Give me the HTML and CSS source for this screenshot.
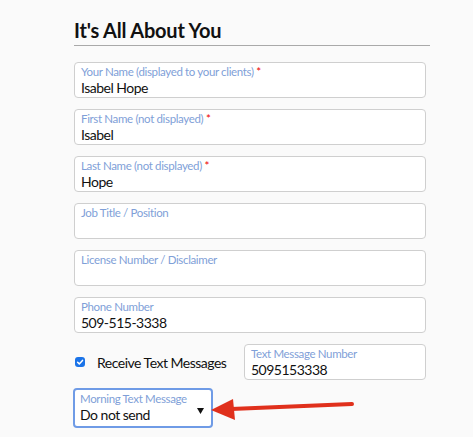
FILE: index.html
```html
<!DOCTYPE html>
<html lang="en">
<head>
    <meta charset="UTF-8">
    <meta name="viewport" content="width=device-width, initial-scale=1.0">
    <title>Profile - About You</title>
    <link rel="stylesheet" href="styles.css">
</head>
<body>
<div class="profile-container">
    <h2>It's All About You</h2>

    <div class="field">
        <label>Your Name (displayed to your clients) <span class="req">*</span></label>
        <div class="value">Isabel Hope</div>
    </div>

    <div class="field">
        <label>First Name (not displayed) <span class="req">*</span></label>
        <div class="value">Isabel</div>
    </div>

    <div class="field">
        <label>Last Name (not displayed) <span class="req">*</span></label>
        <div class="value">Hope</div>
    </div>

    <div class="field">
        <label>Job Title / Position</label>
        <div class="value"></div>
    </div>

    <div class="field">
        <label>License Number / Disclaimer</label>
        <div class="value"></div>
    </div>

    <div class="field">
        <label>Phone Number</label>
        <div class="value">509-515-3338</div>
    </div>

    <div class="sms-row">
        <div class="check-wrap">
            <span class="checkbox">
                <svg viewBox="0 0 10 10" width="10" height="10">
                    <path d="M2.6 5.2 L4.3 6.9 L7.5 3.4" fill="none" stroke="#fff" stroke-width="1.5" stroke-linecap="round" stroke-linejoin="round"/>
                </svg>
            </span>
            <span class="check-label">Receive Text Messages</span>
        </div>
        <div class="field sms-number">
            <label>Text Message Number</label>
            <div class="value">5095153338</div>
        </div>
    </div>

    <div class="select-row">
        <div class="field select-field">
            <label>Morning Text Message</label>
            <div class="value">Do not send</div>
            <svg class="caret" width="7" height="6" viewBox="0 0 7 6">
                <path d="M0 0 L7 0 L3.5 6 Z" fill="#111"/>
            </svg>
        </div>
        <!-- callout arrow pointing at the select -->
        <svg class="callout" width="150" height="30" viewBox="0 0 150 30">
            <path d="M141 6 L20 11" stroke="#e0301c" stroke-width="4" stroke-linecap="round" fill="none"/>
            <path d="M0 12 L22 1 L24 22 Z" fill="#e0301c"/>
        </svg>
    </div>
</div>
</body>
</html>
```

FILE: styles.css
```css
:root {
    --label-color: #7f9fd8;
    --border-color: #cfcfcf;
    --focus-color: #6f9be6;
}

body {
    margin: 0;
    background: #fafafa;
    font-family: Lato, 'Open Sans', sans-serif;
    color: #111;
}

.profile-container {
    width: 352px;
    padding: 19px 0 0 74px;
}

h2 {
    margin: 0 -4px 16px 0;
    padding-bottom: 4px;
    font-size: 20px;
    font-weight: 700;
    letter-spacing: -0.2px;
    border-bottom: 1px solid #a9a9a9;
    line-height: 22px;
}

.field {
    position: relative;
    box-sizing: border-box;
    height: 36px;
    margin-bottom: 11px;
    padding: 2px 6px 0;
    background: #fff;
    border: 1px solid var(--border-color);
    border-radius: 4px;
}

.field label {
    display: block;
    font-size: 11.5px;
    letter-spacing: -0.35px;
    line-height: 14px;
    color: var(--label-color);
}

.req {
    color: #e00;
}

.value {
    font-size: 14px;
    letter-spacing: -0.5px;
    line-height: 17px;
    height: 17px;
}

.sms-row {
    display: flex;
    align-items: center;
    margin-bottom: 8px;
}

.check-wrap {
    display: flex;
    align-items: center;
    flex: 1;
    padding-left: 1px;
}

.checkbox {
    display: flex;
    align-items: center;
    justify-content: center;
    width: 10px;
    height: 10px;
    border-radius: 3px;
    background: #1a73e8;
    margin-right: 12px;
}

.check-label {
    font-size: 14px;
    letter-spacing: -0.5px;
}

.sms-number {
    width: 182px;
    flex: none;
    margin-bottom: 0;
}

.select-row {
    position: relative;
}

.select-field {
    width: 140px;
    height: 40px;
    border: 2px solid var(--focus-color);
    padding: 2px 5px 0;
    margin-left: -1px;
}

.caret {
    position: absolute;
    right: 7px;
    top: 18px;
}

.callout {
    position: absolute;
    left: 137px;
    top: 10px;
}
```
